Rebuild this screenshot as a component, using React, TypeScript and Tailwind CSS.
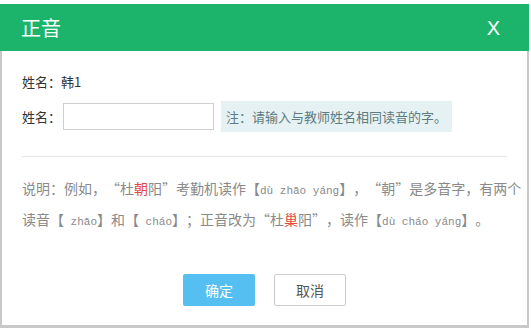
const CJK = "font-['Noto_Sans_CJK_SC','Liberation_Sans',sans-serif]";

function Py({ children }: { children: string }) {
  return (
    <span className="font-['Liberation_Mono',monospace] text-[11px] leading-none whitespace-pre [font-feature-settings:normal]">
      {children}
    </span>
  );
}

function Red({ children }: { children: string }) {
  return <span className="text-[#e4473c]">{children}</span>;
}

export default function App() {
  return (
    <div className={`w-[531px] h-[328px] bg-white pt-[4px] ${CJK}`}>
      <div className="w-[529px] border-x-2 border-b-[3px] border-[#c8c8c8]">
        <header className="-mx-[2px] flex h-[47px] items-center justify-between bg-[#1cb36a] pl-[21px] pr-[29px] text-white">
          <h1 className="text-[20px] leading-none">正音</h1>
          <span className="font-['Liberation_Sans',sans-serif] text-[20px] leading-none">X</span>
        </header>

        <div className="px-[20px]">
          <div className="mt-[21px] flex h-[20px] items-center text-[13px] text-[#333]">
            姓名：韩1
          </div>

          <div className="mt-[9px] flex h-[31px] items-center text-[13px] text-[#333]">
            <span className="w-[41px]">姓名：</span>
            <input className="h-[27px] w-[151px] border border-[#cfcfcf] bg-white px-2 outline-none" />
            <div className="ml-[7px] flex h-[31px] items-center bg-[#e5f1f2] px-[5px] text-[#5c7c82]">
              注：请输入与教师姓名相同读音的字。
            </div>
          </div>

          <div className="mt-[24px] h-px bg-[#e6e6e6]" />

          <p className="mt-[16px] whitespace-nowrap text-[14px] leading-[31px] text-[#8a8a8a] [font-feature-settings:'fwid'] [text-spacing-trim:space-all]">
            说明：例如，“杜<Red>朝</Red>阳”考勤机读作【<Py>dù zhāo yáng</Py>】，“朝”是多音字，有两个
            <br />
            读音【<Py> zhāo</Py>】和【<Py> cháo</Py>】；正音改为“杜<Red>巢</Red>阳”，读作【<Py>dù cháo yáng</Py>】。
          </p>

          <div className="mt-[39px] mb-[19px] flex justify-center gap-[19px] text-[14px]">
            <button className="h-[32px] w-[72px] rounded-[2px] bg-[#55bff2] text-white">确定</button>
            <button className="h-[32px] w-[72px] rounded-[2px] border border-[#cccccc] bg-white text-[#555]">取消</button>
          </div>
        </div>
      </div>
    </div>
  );
}
